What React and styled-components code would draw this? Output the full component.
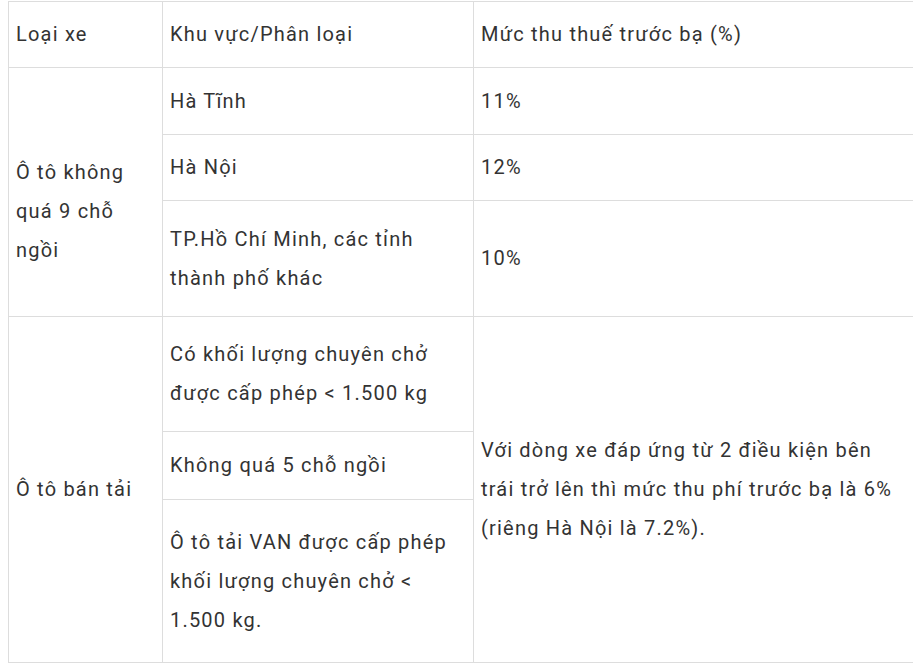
import React from "react";
import styled, { createGlobalStyle } from "styled-components";

const GlobalStyle = createGlobalStyle`
  body {
    margin: 1px 8px 0;
    background: #fff;
    font-family: Roboto, "Noto Sans", sans-serif;
  }
`;

const Table = styled.table`
  width: 905px;
  border-collapse: collapse;
  table-layout: fixed;
  font-size: 20px;
  line-height: 39px;
  letter-spacing: 1.2px;
  color: #333;
`;

const Col = styled.col`
  width: ${(p) => p.$w}px;
`;

const Row = styled.tr`
  height: ${(p) => p.$h}px;
`;

const Cell = styled.td`
  border: 1px solid #ddd;
  padding: ${(p) => p.$top || 0}px 7px 0;
  vertical-align: middle;
  text-align: left;
  font-weight: normal;
`;

const rows = [
  { h: 66, cells: [["Loại xe"], ["Khu vực/Phân loại"], ["Mức thu thuế trước bạ (%)"]] },
  { h: 67, cells: [["Ô tô không quá 9 chỗ ngồi", 3, 38], ["Hà Tĩnh"], ["11%"]] },
  { h: 66, cells: [["Hà Nội"], ["12%"]] },
  { h: 116, cells: [["TP.Hồ Chí Minh, các tỉnh thành phố khác"], ["10%"]] },
  {
    h: 115,
    cells: [
      ["Ô tô bán tải", 3],
      ["Có khối lượng chuyên chở được cấp phép < 1.500 kg"],
      ["Với dòng xe đáp ứng từ 2 điều kiện bên trái trở lên thì mức thu phí trước bạ là 6% (riêng Hà Nội là 7.2%).", 3],
    ],
  },
  { h: 68, cells: [["Không quá 5 chỗ ngồi"]] },
  { h: 163, cells: [["Ô tô tải VAN được cấp phép khối lượng chuyên chở < 1.500 kg."]] },
];

const App = () => {
  return (
    <>
      <GlobalStyle />
      <Table>
        <colgroup>
          <Col $w={154} />
          <Col $w={311} />
          <Col $w={440} />
        </colgroup>
        <tbody>
          {rows.map((row, i) => (
            <Row key={i} $h={row.h}>
              {row.cells.map(([text, span, top], j) => (
                <Cell key={j} rowSpan={span} $top={top}>
                  {text}
                </Cell>
              ))}
            </Row>
          ))}
        </tbody>
      </Table>
    </>
  );
};

export default App;
